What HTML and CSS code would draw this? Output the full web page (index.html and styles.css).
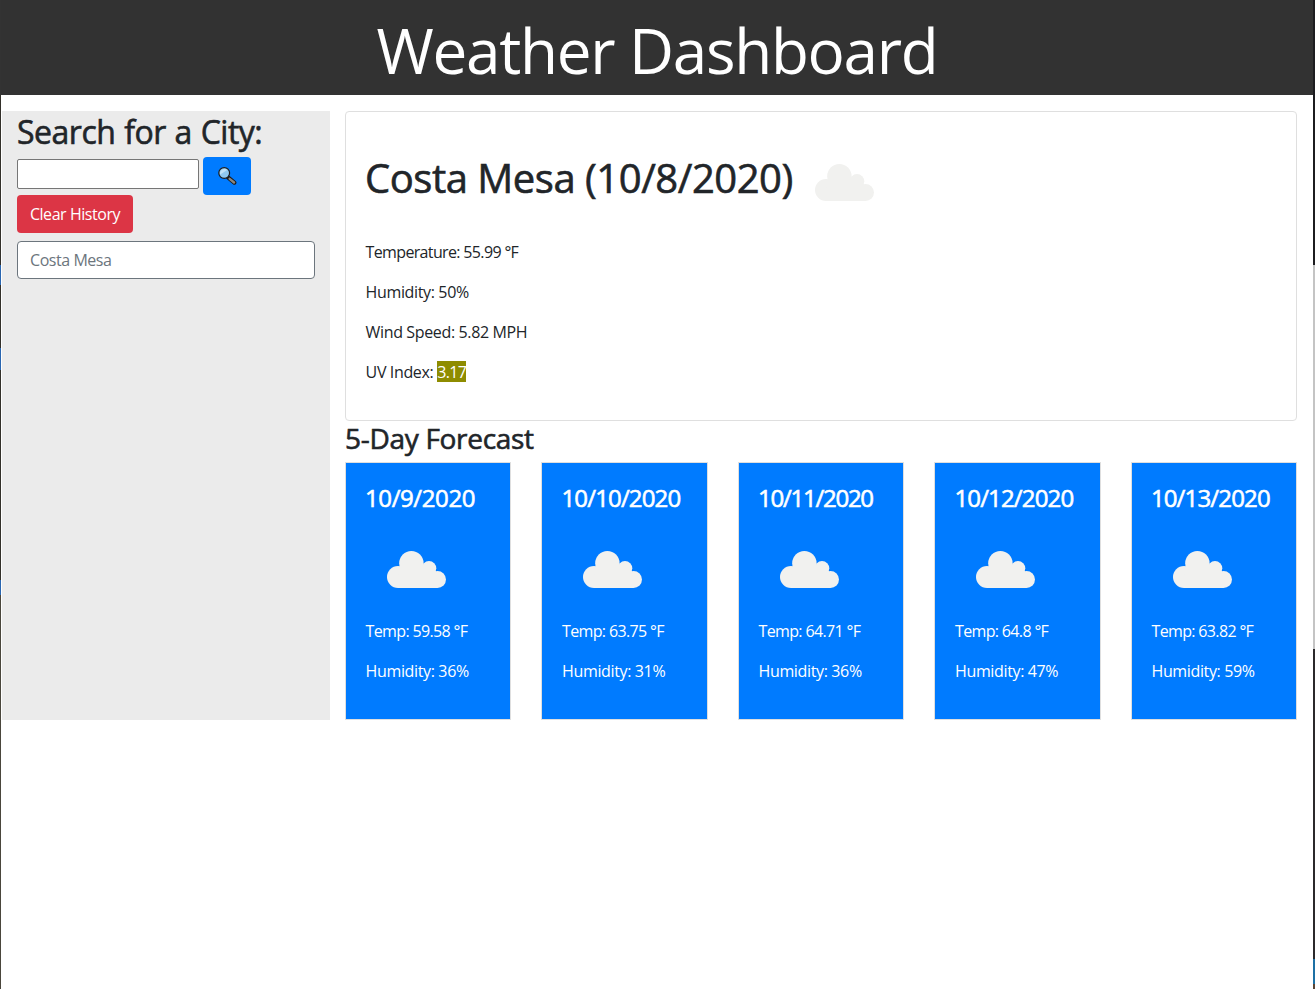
FILE: index.html
```
<!DOCTYPE html>
<html lang="en">
<head>
<meta charset="utf-8">
<title>Weather Dashboard</title>
<link rel="stylesheet" href="styles.css">
</head>
<body>
<svg class="defs" width="0" height="0" aria-hidden="true">
  <symbol id="cloud" viewBox="0 0 59 37">
    <circle cx="11" cy="26" r="11"/>
    <circle cx="24.4" cy="12.2" r="12.2"/>
    <circle cx="42" cy="17.3" r="7.3"/>
    <circle cx="50.5" cy="28.5" r="8.5"/>
    <path d="M11 37V26L13 15.2L24 12L37 14L42 17L49 20.3L50.5 28V37Z"/>
  </symbol>
</svg>
<div class="window">
  <div class="edge edge-left"></div>
  <div class="page">
    <header class="banner"><h1>Weather Dashboard</h1></header>
    <div class="row">
      <aside class="sidebar">
        <h2>Search for a City:</h2>
        <div class="search">
          <input type="text" class="city" aria-label="City">
          <button class="btn primary" aria-label="Search">
            <svg width="20" height="20" viewBox="0 0 20 20">
              <path d="M11.3 11.6L17.3 16.6" stroke="#1b1b1b" stroke-width="4.2" stroke-linecap="round"/>
              <path d="M12.6 12.8L17.1 16.5" stroke="#8c8880" stroke-width="2.3" stroke-linecap="round"/>
              <circle cx="7.2" cy="7" r="5.4" fill="#8fc8ef" stroke="#1b1b1b" stroke-width="1.2"/>
              <path d="M3.2 8.5A4.4 4.4 0 0 1 10.2 3.9Z" fill="#c0e2f7"/>
            </svg>
          </button>
        </div>
        <button class="btn danger">Clear History</button>
        <div class="history">Costa Mesa</div>
      </aside>
      <main class="main">
        <section class="card current">
          <div class="heading">
            <h2>Costa Mesa (10/8/2020)</h2>
            <svg class="cloud"><use href="#cloud"/></svg>
          </div>
          <p class="temp">Temperature: 55.99 °F</p>
          <p>Humidity: 50%</p>
          <p>Wind Speed: 5.82 MPH</p>
          <p>UV Index: <span class="uv">3.17</span></p>
        </section>
        <h3>5-Day Forecast</h3>
        <section class="forecast">
          <article class="card day"><h4 class="short">10/9/2020</h4><svg class="cloud"><use href="#cloud"/></svg><p class="temp">Temp: 59.58 °F</p><p>Humidity: 36%</p></article>
          <article class="card day"><h4>10/10/2020</h4><svg class="cloud"><use href="#cloud"/></svg><p class="temp">Temp: 63.75 °F</p><p>Humidity: 31%</p></article>
          <article class="card day"><h4 class="tight">10/11/2020</h4><svg class="cloud"><use href="#cloud"/></svg><p class="temp">Temp: 64.71 °F</p><p>Humidity: 36%</p></article>
          <article class="card day"><h4>10/12/2020</h4><svg class="cloud"><use href="#cloud"/></svg><p class="temp">Temp: 64.8 °F</p><p>Humidity: 47%</p></article>
          <article class="card day"><h4>10/13/2020</h4><svg class="cloud"><use href="#cloud"/></svg><p class="temp">Temp: 63.82 °F</p><p>Humidity: 59%</p></article>
        </section>
      </main>
    </div>
  </div>
  <div class="edge edge-right"></div>
</div>
</body>
</html>
```
FILE: styles.css
```
* { box-sizing: border-box; }
body { margin: 0; background: #fff; color: #212529; font: 400 16px/24px "Open Sans", "Noto Sans", sans-serif; }
h1, h2, h3, h4, p { margin: 0; white-space: nowrap; }
h2, h3, h4 { font-weight: 400; line-height: 1.2; -webkit-text-stroke: 0.6px currentColor; }
.defs { display: block; position: absolute; }
.window { display: flex; height: 989px; overflow: hidden; }
.edge-left { width: 1px; background: linear-gradient(#333 95px, #33302a 95px 265px, #2a66b0 265px 285px, #33302a 285px 348px, #2a66b0 348px 370px, #33302a 370px 580px, #2a66b0 580px 595px, #4a463c 595px); }
.edge-right { width: 2px; background: linear-gradient(#1c1c1f 265px, #c4c4c4 265px 649px, #2b292b 649px 959px, #1c70a4 959px 984px, #5a4636 984px); }
.page { flex: 1; min-width: 0; }
.banner { height: 95px; background: #323232; text-align: center; padding-top: 2px; }
.banner h1 { color: #fff; font-size: 62px; font-weight: 400; line-height: 96px; letter-spacing: -1.3px; }
.row { display: flex; margin-top: 16px; }
.sidebar { width: 328px; height: 609px; margin-left: 1px; padding: 2px 15px 0; background: #ebebeb; }
.sidebar h2 { font-size: 32px; letter-spacing: -0.5px; word-spacing: 1px; }
.search { display: flex; align-items: flex-start; gap: 4px; margin-top: 6px; height: 38px; }
.city { width: 182px; height: 30px; margin-top: 2px; border: 1px solid #767676; border-radius: 2px; background: #fff; }
.btn { display: block; height: 38px; border: 0; border-radius: 4px; padding: 0; color: #fff; font: inherit; }
.primary { width: 48px; background: #007bff; }
.primary svg { display: block; margin: 0 auto; fill: none; }
.danger { width: 116px; background: #dc3545; letter-spacing: -0.45px; }
.history { width: 298px; height: 38px; margin-top: 8px; padding: 6px 12px; border: 1px solid #6c757d; border-radius: 4px; background: #fff; color: #6c757d; letter-spacing: -0.45px; }
.main { width: 952px; margin-left: 15px; }
.card { border: 1px solid #dfdfdf; border-radius: 4px; padding: 20px 19px; }
.cloud { display: block; width: 59px; height: 37px; fill: #f1f1ef; }
.current { height: 310px; padding-top: 19px; }
.heading { display: flex; align-items: center; height: 98px; margin-bottom: 11px; }
.heading h2 { width: 428px; font-size: 40px; padding-bottom: 4px; letter-spacing: -0.48px; }
.heading .cloud { margin: 5px 0 0 22px; }
.card p { margin-bottom: 16px; padding-left: 0.6px; letter-spacing: -0.36px; }
.card .temp { letter-spacing: -0.65px; }
.uv { display: inline-block; height: 21px; line-height: 23px; background: #8e8c00; color: #fff; letter-spacing: -0.6px; }
h3 { height: 41px; padding-top: 1px; font-size: 28px; letter-spacing: -0.3px; }
.forecast { display: grid; grid-template-columns: repeat(5, 166.1px); justify-content: space-between; }
.day { height: 258px; border-radius: 0; background: #007bff; color: #fff; }
.day h4 { padding-top: 1px; font-size: 24px; height: 37px; letter-spacing: -0.85px; }
.day .short { letter-spacing: -0.4px; }
.day .tight { letter-spacing: -1.25px; }
.day .cloud { margin: 31px 0 31px 22px; }
```
